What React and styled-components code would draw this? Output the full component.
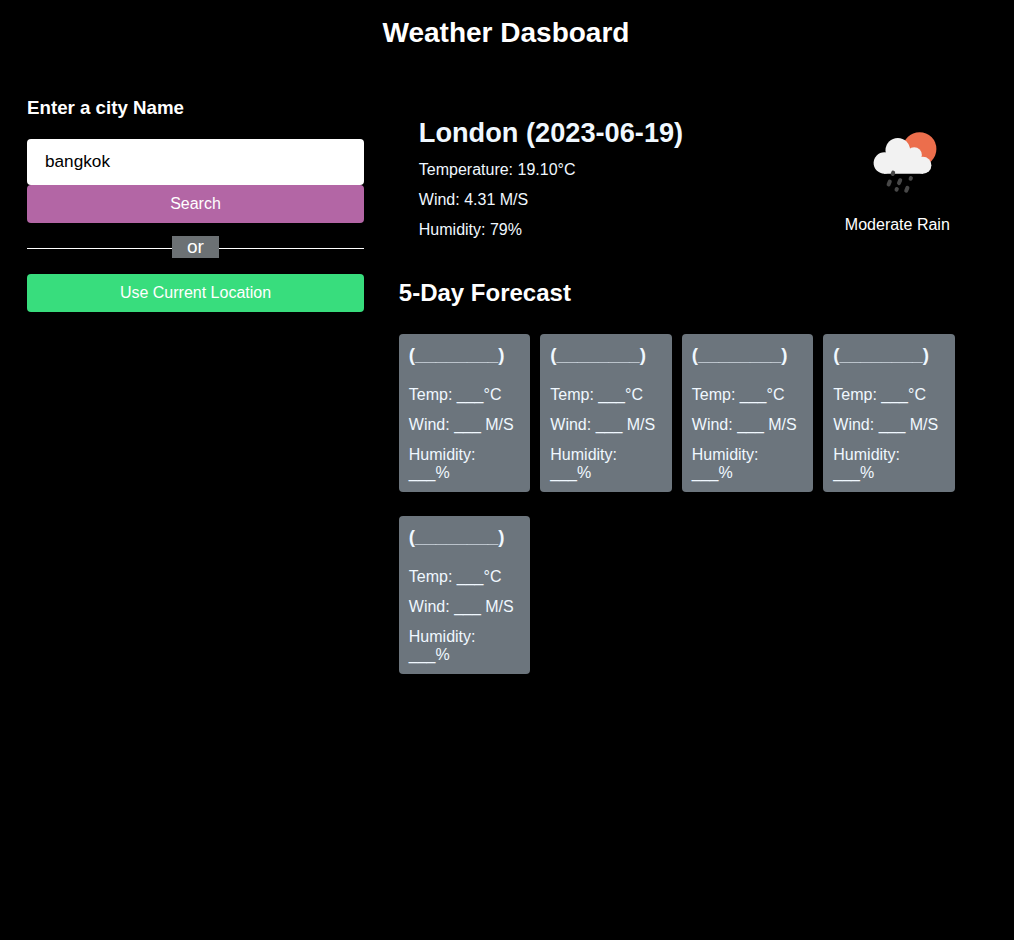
import React from "react";
import styled, { createGlobalStyle } from "styled-components";

const GlobalStyle = createGlobalStyle`
  * { box-sizing: border-box; margin: 0; padding: 0; }
  body {
    background: #000;
    color: #fff;
    font-family: Arial, "Liberation Sans", sans-serif;
    font-size: 16px;
  }
`;

const Title = styled.h1`
  padding: 17px 2px 0 0;
  font-size: 28px;
  line-height: 32px;
  text-align: center;
`;

const Container = styled.div`
  display: flex;
  align-items: flex-start;
  gap: 34.8px;
  padding: 47px 59.2px 0 27px;
`;

const SearchPanel = styled.section`
  width: 337px;
  flex: none;
`;

const SearchHeading = styled.h3`
  font-size: 18.72px;
  line-height: 23px;
  margin-bottom: 20px;
`;

const CityInput = styled.input`
  display: block;
  width: 100%;
  height: 46px;
  padding: 0 17px 1px 18px;
  border: 0;
  border-radius: 4px;
  outline: none;
  background: #fff;
  color: #000;
  font: 17.2px Arial, "Liberation Sans", sans-serif;
`;

const Button = styled.button`
  display: block;
  width: 100%;
  height: 38px;
  border: 0;
  border-radius: 4px;
  background: ${(p) => p.$color};
  color: #fff;
  font: 16px Arial, "Liberation Sans", sans-serif;
`;

const Separator = styled.div`
  display: flex;
  align-items: center;
  height: 22px;
  margin: 13px 0 16px;

  &::before,
  &::after {
    content: "";
    height: 1px;
    flex: 1;
    margin-top: 3px;
    background: #fff;
  }
`;

const SeparatorText = styled.span`
  width: 47px;
  height: 22px;
  background: #6c7174;
  font-size: 19px;
  line-height: 22px;
  text-align: center;
`;

const WeatherPanel = styled.section`
  flex: 1;
  min-width: 0;
`;

const CurrentWeather = styled.div`
  display: flex;
  justify-content: space-between;
  padding: 21px 5px 0 20px;
  height: 170px;
  color: aliceblue;
`;

const CityName = styled.h2`
  font-size: 27.2px;
  line-height: 32px;
`;

const Reading = styled.p`
  margin-top: 12px;
  line-height: 18px;
`;

const Condition = styled.div`
  display: flex;
  flex-direction: column;
  align-items: center;
  padding-top: 1px;
  color: #fff;
`;

const ConditionIcon = styled.svg`
  display: block;
  width: 100px;
  height: 90px;
`;

const ConditionText = styled.p`
  margin-top: 8px;
  line-height: 18px;
`;

const ForecastHeading = styled.h2`
  font-size: 24px;
  line-height: 28px;
  margin: 13px 0 27px;
`;

const CardGrid = styled.ul`
  display: grid;
  grid-template-columns: repeat(4, 1fr);
  gap: 24px 10px;
  list-style: none;
`;

const Card = styled.li`
  height: 158px;
  padding: 10px;
  border-radius: 4px;
  background: #6c757d;
  color: aliceblue;
`;

const CardDate = styled.h3`
  font-size: 18.72px;
  line-height: 22px;
  margin-bottom: 20px;
`;

const CardReading = styled.p`
  line-height: 18px;

  & + & {
    margin-top: 12px;
  }
`;

const days = [1, 2, 3, 4, 5];

function RainIcon() {
  return (
    <ConditionIcon viewBox="0 0 100 90" aria-hidden="true">
      <circle cx="72.6" cy="31" r="16.8" fill="#ec6e4c" />
      <g fill="#f2f2f2">
        <circle cx="37.3" cy="45" r="10.7" />
        <circle cx="50.8" cy="32.2" r="12.3" />
        <circle cx="67.2" cy="37" r="7.7" />
        <circle cx="75.9" cy="47.2" r="8.5" />
        <path d="M37 36H68L76 44V55.7H37Z" />
      </g>
      <g stroke="#484848" strokeWidth="4" strokeLinecap="round">
        <path d="M46.2 54.6l-.5 1.4M42.8 63.5l-1.2 2.9M53.2 62.2l-1.2 2.9M63.9 60.1l-.3.7M49.8 71l-.3.6M60.4 69.9l-1.2 2.8" />
      </g>
    </ConditionIcon>
  );
}

function ForecastCard() {
  return (
    <Card>
      <CardDate>(________)</CardDate>
      <CardReading>Temp: ___°C</CardReading>
      <CardReading>Wind: ___ M/S</CardReading>
      <CardReading>Humidity: ___%</CardReading>
    </Card>
  );
}

export default function App() {
  return (
    <>
      <GlobalStyle />
      <Title>Weather Dasboard</Title>
      <Container>
        <SearchPanel>
          <SearchHeading>Enter a city Name</SearchHeading>
          <CityInput type="text" defaultValue="bangkok" aria-label="City name" />
          <Button $color="#b366a5">Search</Button>
          <Separator>
            <SeparatorText>or</SeparatorText>
          </Separator>
          <Button $color="#38dd7d">Use Current Location</Button>
        </SearchPanel>
        <WeatherPanel>
          <CurrentWeather>
            <div>
              <CityName>London (2023-06-19)</CityName>
              <Reading>Temperature: 19.10°C</Reading>
              <Reading>Wind: 4.31 M/S</Reading>
              <Reading>Humidity: 79%</Reading>
            </div>
            <Condition>
              <RainIcon />
              <ConditionText>Moderate Rain</ConditionText>
            </Condition>
          </CurrentWeather>
          <ForecastHeading>5-Day Forecast</ForecastHeading>
          <CardGrid>
            {days.map((day) => (
              <ForecastCard key={day} />
            ))}
          </CardGrid>
        </WeatherPanel>
      </Container>
    </>
  );
}
